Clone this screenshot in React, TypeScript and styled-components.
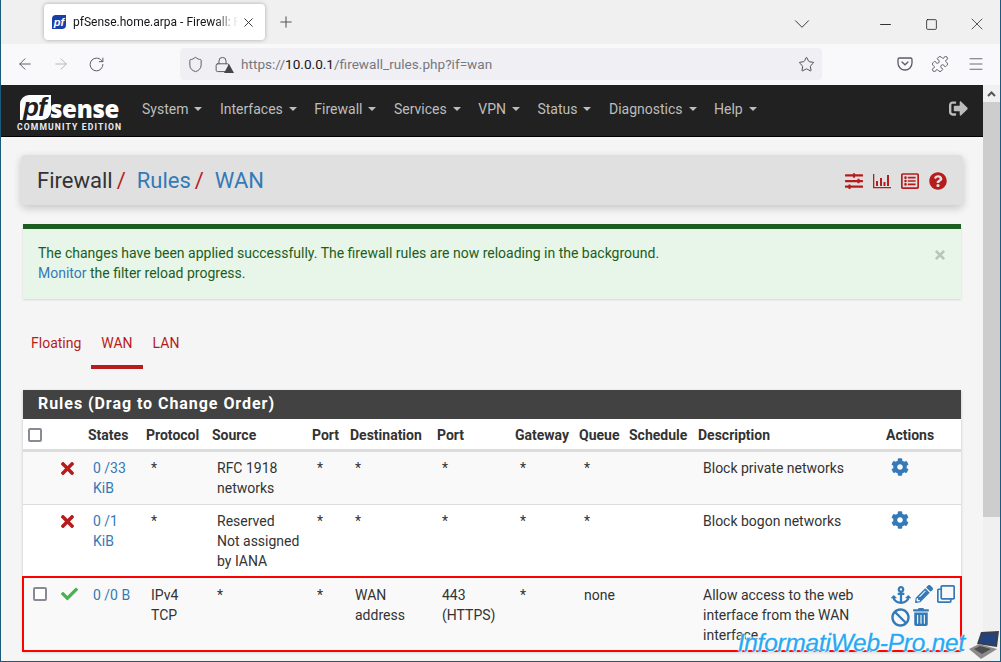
import React from "react";
import styled, { createGlobalStyle } from "styled-components";
import { ArrowLeft, ArrowRight, RotateCw, Shield, Star, Puzzle, Menu, Plus, X, ChevronDown, Minus, Square, Lock } from "lucide-react";
import { FaTimes, FaCheck, FaCog, FaAnchor, FaPencilAlt, FaRegClone, FaBan, FaTrashAlt, FaSlidersH, FaRegListAlt, FaQuestionCircle, FaSignOutAlt } from "react-icons/fa";

const Global = createGlobalStyle`
  html, body { margin: 0; padding: 0; height: 100%; overflow: hidden; }
  body { font-family: Roboto, "Liberation Sans", sans-serif; font-size: 14px; line-height: 20px; color: #212121; }
  * { box-sizing: border-box; }
`;

const Win = styled.div`
  position: relative; width: 1001px; height: 662px; display: flex; flex-direction: column; overflow: hidden;
  border-left: 1px solid #1c5a7d; border-right: 1px solid #1c5a7d; border-bottom: 1px solid #1c5a7d;
`;
const TabStrip = styled.div`
  height: 44px; flex: none; background: #f0f0f0; display: flex; align-items: flex-start; padding: 4px 0 0 43px;
`;
const Tab = styled.div`
  width: 221px; height: 36px; background: #fff; border-radius: 4px; box-shadow: 0 0 4px rgba(0,0,0,.3);
  display: flex; align-items: center; padding: 0 8px;
`;
const Favicon = styled.span`
  width: 14px; height: 14px; flex: none; background: #1b3fa8; color: #fff; font: italic bold 11px/14px "Liberation Sans", sans-serif; text-align: center; margin-right: 7px; border-top-left-radius: 4px; border-bottom-right-radius: 4px;
`;
const TabTitle = styled.span`
  flex: 1; min-width: 0; font-family: Roboto, sans-serif; font-size: 12px; white-space: nowrap; overflow: hidden; color: #15141a;
  mask-image: linear-gradient(to right, #000 86%, transparent 100%);
`;
const TabClose = styled.span` display: flex; color: #333; margin-left: 3px; margin-right: 1px; `;
const NewTab = styled.span` margin: 9px 0 0 12px; color: #555; display: flex; `;
const StripSpacer = styled.div` flex: 1; `;
const StripIcon = styled.span<{ $w: number; $gap?: number }>`
  width: ${p => p.$w}px; height: 40px; display: flex; align-items: center; justify-content: center; color: #222; margin-left: ${p => p.$gap ?? 0}px;
`;
const Toolbar = styled.div`
  height: 41px; flex: none; background: #f9f9fb; display: flex; align-items: center; padding: 0 12px 1px 15px; color: #5b5b66;
`;
const NavBtn = styled.span<{ $dim?: boolean; $mr: number }>`
  display: flex; margin-right: ${p => p.$mr}px; color: ${p => p.$dim ? "#b5b5bb" : "#5b5b66"};
`;
const UrlBar = styled.div`
  width: 642px; height: 32px; background: #f0f0f4; border-radius: 4px; display: flex; align-items: center; padding: 0 7px; margin: 0 75px 0 75px; color: #5b5b66;
`;
const UrlText = styled.span`
  flex: 1; font-size: 13.6px; color: #77777f; margin-left: 10px;
  b { font-weight: 400; color: #15141a; }
`;
const LockWrap = styled.span` position: relative; display: flex; margin-left: 10px; `;
const Warn = styled.span`
  position: absolute; right: -3px; bottom: 0; width: 0; height: 0; border-left: 5px solid transparent; border-right: 5px solid transparent; border-bottom: 9px solid #444;
`;
const RightTools = styled.div` display: flex; align-items: center; gap: 18px; `;
const Body = styled.div` flex: 1; display: flex; min-height: 0; `;
const Page = styled.div` flex: 1; background: #f5f5f5; min-width: 0; overflow: hidden; `;
const Scrollbar = styled.div` width: 17px; flex: none; background: #f0f0f0; display: flex; flex-direction: column; `;
const ScrollUp = styled.div` height: 17px; display: flex; align-items: center; justify-content: center; color: #555; `;
const ScrollThumb = styled.div` height: 415px; background: #cdcdcd; `;

const NavBar = styled.nav`
  height: 52px; background: #212121; border-bottom: 1px solid #000; display: flex; align-items: center; padding-left: 16px; position: relative;
`;
const Logo = styled.div` width: 107px; margin-right: 18px; color: #fff; display: flex; flex-direction: column; `;
const LogoTop = styled.div` display: flex; align-items: flex-start; height: 33px; padding: 6px 0 0 3px; `;
const LogoPf = styled.span`
  background: #fff; color: #212121; font: italic 700 26px/25px "Liberation Sans", sans-serif; padding: 0 0 0 3px; height: 25px; width: 31px; border-top-left-radius: 9px; border-bottom-right-radius: 9px; letter-spacing: -1px;
`;
const LogoSense = styled.span` font: 800 24px/25px "Open Sans", sans-serif; letter-spacing: -.3px; margin: 1px 0 0 -1px; `;
const LogoSub = styled.div` font: 700 8.6px/10px Roboto, sans-serif; letter-spacing: 1.12px; white-space: nowrap; color: #e6eef2; `;
const NavItem = styled.span`
  color: #bdbdbd; font-size: 14px; margin-right: 17.5px; display: inline-flex; align-items: center; margin-top: -3px;
  &::after { content: ""; border-left: 4px solid transparent; border-right: 4px solid transparent; border-top: 4px solid #bdbdbd; margin-left: 6px; }
`;
const Logout = styled.span` position: absolute; right: 15px; top: 14px; color: #bdbdbd; display: flex; `;

const Container = styled.div` padding: 18px 22px 0 22px; `;
const TitleBar = styled.div`
  margin: 0 -2px; height: 50px; background: #e0e0e0; border-radius: 4px; box-shadow: 0 3px 8px rgba(0,0,0,.2);
  display: flex; align-items: center; justify-content: space-between; padding: 1px 16px 0 16px; font-size: 22px;
`;
const Crumbs = styled.div` display: flex; align-items: center; `;
const Crumb = styled.span<{ $link?: boolean }>` color: ${p => p.$link ? "#337ab7" : "#333"}; `;
const Slash = styled.span` color: #b71c1c; margin: 0 11px 0 4px; `;
const TitleIcons = styled.div` display: flex; align-items: center; gap: 10px; color: #b71c1c; `;
const Alert = styled.div`
  position: relative; margin-top: 19px; height: 75px; background: #e8f5e9; border-top: 5px solid #1b5e20; box-shadow: 0 1px 2px rgba(0,0,0,.12);
  padding: 14px 15px 0; color: #1b5e20; 
  a { color: #337ab7; }
`;
const Close = styled.span` position: absolute; right: 14px; top: 19px; color: #bbc4bc; display: flex; `;
const Tabs = styled.div` margin-top: 24px; height: 46px; display: flex; `;
const TabLink = styled.span<{ $on?: boolean }>`
  color: #b71c1c; padding: 10px 10px 0; height: 46px;
  ${p => p.$on ? "border-bottom: 4px solid #b71c1c;" : ""}
  &:first-child { padding-left: 8px; }
`;
const Panel = styled.section` margin-top: 21px; box-shadow: 0 1px 3px rgba(0,0,0,.2); background: #fff; `;
const PanelHead = styled.div`
  height: 29px; background: #424242; color: #fff; font-size: 16px; font-weight: 700; line-height: 28px; padding-left: 15px; letter-spacing: .95px;
`;
const Table = styled.table` width: 938px; table-layout: fixed; border-collapse: collapse; `;
const Th = styled.th`
  height: 31px; padding: 3px 5px 0; text-align: left; font-size: 14px; font-weight: 700; color: #333; border-bottom: 3px solid #ddd; white-space: nowrap; background: #fff; overflow: visible;
`;
const Td = styled.td`
  padding: 6px 5px 6px 10px; vertical-align: top; color: #333; border-top: 1px solid #ddd;
  a { color: #337ab7; }
`;
const Row = styled.tr<{ $odd?: boolean; $mark?: boolean }>`
  background: ${p => p.$odd ? "#f9f9f9" : "#fff"};
  ${p => p.$mark ? `outline: 2px solid #f00; outline-offset: -1px; ${Td} { padding-top: 7px; }` : ""}
`;
const StateIcon = styled.span<{ $c: string; $x: number; $y: number }>`
  display: flex; color: ${p => p.$c}; margin-left: ${p => p.$x}px; margin-top: ${p => p.$y}px;
`;
const Actions = styled.div`
  display: flex; flex-wrap: wrap; color: #337ab7; gap: 3px 4px; width: 70px;
`;
const Trash = styled(FaTrashAlt)` margin-left: -2px; `;
const Box = styled.span`
  display: block; width: 14px; height: 14px; background: #fff; border: 2px solid #8a8a94; border-radius: 2px;
`;
const RowBox = styled(Box)` margin: 3px 0 0 5px; `;
const Water = styled.div`
  position: absolute; right: 0; bottom: 0; display: flex; align-items: flex-end; pointer-events: none;
`;
const WaterText = styled.span`
  font: italic 400 24.4px/26px "Liberation Sans", sans-serif; color: #29a8f0; letter-spacing: -.2px; -webkit-text-stroke: .3px #2ab0ff;
  text-shadow: 0 0 2px #fff, 0 0 3px #fff, 1px 1px 0 rgba(255,255,255,.9); margin-right: 3px; margin-bottom: 5px;
`;

const BarChart = () => (
  <svg width="18" height="16" viewBox="0 0 18 16" fill="currentColor"><path d="M0 1h1.3v13H18v1.3H0z"/><path d="M3 8h2v5H3zM7 5h2v8H7zM10.5 9h2v4h-2zM14 2h2v11h-2z"/></svg>
);
const Pocket = () => (
  <svg width="16" height="16" viewBox="0 0 16 16" fill="none" stroke="currentColor" strokeWidth="1.3"><path d="M2.5 2h11A1.5 1.5 0 0 1 15 3.5V7a7 7 0 0 1-14 0V3.5A1.5 1.5 0 0 1 2.5 2z"/><path d="M5 6l3 2.8L11 6" strokeLinecap="round"/></svg>
);
const Laptop = () => (
  <svg width="32" height="30" viewBox="0 0 32 30">
    <path d="M13 1L31 0l-2 16-20-3z" fill="#3a3f48"/>
    <path d="M14 3l15-1-2 12-16-2z" fill="#24427e"/>
    <path d="M1 18l10-5 18 5-16 10z" fill="#8b8b8b"/>
    <path d="M6 18l6-3 11 3-9 5z" fill="#4e4e4e"/>
  </svg>
);

const nav = ["System", "Interfaces", "Firewall", "Services", "VPN", "Status", "Diagnostics", "Help"];
const heads = ["States", "Protocol", "Source", "Port", "Destination", "Port", "Gateway", "Queue", "Schedule", "Description", "Actions"];
const widths = [32, 28, 58, 66, 100, 38, 87, 78, 64, 50, 69, 188, 80];

export default function App() {
  return (
    <Win>
      <Global />
      <TabStrip>
        <Tab>
          <Favicon>pf</Favicon>
          <TabTitle>pfSense.home.arpa - Firewall: Rules: WAN</TabTitle>
          <TabClose><X size={15} strokeWidth={1.5} /></TabClose>
        </Tab>
        <NewTab><Plus size={18} strokeWidth={1.4} /></NewTab>
        <StripSpacer />
        <StripIcon $w={46}><ChevronDown size={26} strokeWidth={.8} /></StripIcon>
        <StripIcon $w={46} $gap={37}><Minus size={17} strokeWidth={1.3} /></StripIcon>
        <StripIcon $w={46}><Square size={13} strokeWidth={1.5} /></StripIcon>
        <StripIcon $w={46}><X size={20} strokeWidth={.9} /></StripIcon>
      </TabStrip>
      <Toolbar>
        <NavBtn $mr={18}><ArrowLeft size={18} strokeWidth={1.3} /></NavBtn>
        <NavBtn $dim $mr={18}><ArrowRight size={18} strokeWidth={1.3} /></NavBtn>
        <NavBtn $mr={0}><RotateCw size={17} strokeWidth={1.4} /></NavBtn>
        <UrlBar>
          <Shield size={17} strokeWidth={1.4} />
          <LockWrap><Lock size={17} strokeWidth={1.4} /><Warn /></LockWrap>
          <UrlText>https://<b>10.0.0.1</b>/firewall_rules.php?if=wan</UrlText>
          <Star size={17} strokeWidth={1.3} color="#444" />
        </UrlBar>
        <RightTools>
          <Pocket />
          <Puzzle size={18} strokeWidth={1.3} />
          <Menu size={18} strokeWidth={1.2} />
        </RightTools>
      </Toolbar>
      <Body>
        <Page>
          <NavBar>
            <Logo>
              <LogoTop><LogoPf>pf</LogoPf><LogoSense>sense</LogoSense></LogoTop>
              <LogoSub>COMMUNITY EDITION</LogoSub>
            </Logo>
            {nav.map(n => <NavItem key={n}>{n}</NavItem>)}
            <Logout><FaSignOutAlt size={19} /></Logout>
          </NavBar>
          <Container>
            <TitleBar>
              <Crumbs>
                <Crumb>Firewall</Crumb><Slash>/</Slash>
                <Crumb $link>Rules</Crumb><Slash>/</Slash>
                <Crumb $link>WAN</Crumb>
              </Crumbs>
              <TitleIcons>
                <FaSlidersH size={18} />
                <BarChart />
                <FaRegListAlt size={18} />
                <FaQuestionCircle size={18} />
              </TitleIcons>
            </TitleBar>
            <Alert>
              The changes have been applied successfully. The firewall rules are now reloading in the background.<br />
              <a>Monitor</a> the filter reload progress.
              <Close><FaTimes size={14} /></Close>
            </Alert>
            <Tabs>
              <TabLink>Floating</TabLink>
              <TabLink $on>WAN</TabLink>
              <TabLink>LAN</TabLink>
            </Tabs>
            <Panel>
              <PanelHead>Rules (Drag to Change Order)</PanelHead>
              <Table>
                <colgroup>{widths.map((w, i) => <col key={i} style={{ width: w }} />)}</colgroup>
                <thead>
                  <tr>
                    <Th><Box /></Th><Th />
                    {heads.map((h, i) => <Th key={i}>{h}</Th>)}
                  </tr>
                </thead>
                <tbody>
                  <Row $odd>
                    <Td /><Td><StateIcon $c="#b71c1c" $x={-7} $y={1}><FaTimes size={19} /></StateIcon></Td>
                    <Td><a>0 /33 KiB</a></Td><Td>*</Td><Td>RFC 1918 networks</Td><Td>*</Td><Td>*</Td><Td>*</Td><Td>*</Td><Td>*</Td><Td />
                    <Td>Block private networks</Td>
                    <Td><Actions><FaCog size={18} /></Actions></Td>
                  </Row>
                  <Row>
                    <Td /><Td><StateIcon $c="#b71c1c" $x={-7} $y={1}><FaTimes size={19} /></StateIcon></Td>
                    <Td><a>0 /1 KiB</a></Td><Td>*</Td><Td>Reserved<br />Not assigned by IANA</Td><Td>*</Td><Td>*</Td><Td>*</Td><Td>*</Td><Td>*</Td><Td />
                    <Td>Block bogon networks</Td>
                    <Td><Actions><FaCog size={18} /></Actions></Td>
                  </Row>
                  <Row $odd $mark>
                    <Td style={{ padding: "6px 0 6px 5px" }}><RowBox /></Td><Td><StateIcon $c="#4caf50" $x={-4} $y={0}><FaCheck size={18} /></StateIcon></Td>
                    <Td><a>0 /0 B</a></Td><Td>IPv4<br />TCP</Td><Td>*</Td><Td>*</Td><Td>WAN address</Td><Td>443 (HTTPS)</Td><Td>*</Td><Td>none</Td><Td />
                    <Td>Allow access to the web interface from the WAN interface</Td>
                    <Td><Actions><FaAnchor size={20} /><FaPencilAlt size={18} /><FaRegClone size={18} /><FaBan size={19} /><Trash size={18} /></Actions></Td>
                  </Row>
                </tbody>
              </Table>
            </Panel>
          </Container>
        </Page>
        <Scrollbar>
          <ScrollUp><svg width="9" height="6" viewBox="0 0 9 6" fill="none" stroke="currentColor" strokeWidth="2"><path d="M1 5l3.5-3.5L8 5" /></svg></ScrollUp>
          <ScrollThumb />
        </Scrollbar>
      </Body>
      <Water><WaterText>InformatiWeb-Pro.net</WaterText><Laptop /></Water>
    </Win>
  );
}
